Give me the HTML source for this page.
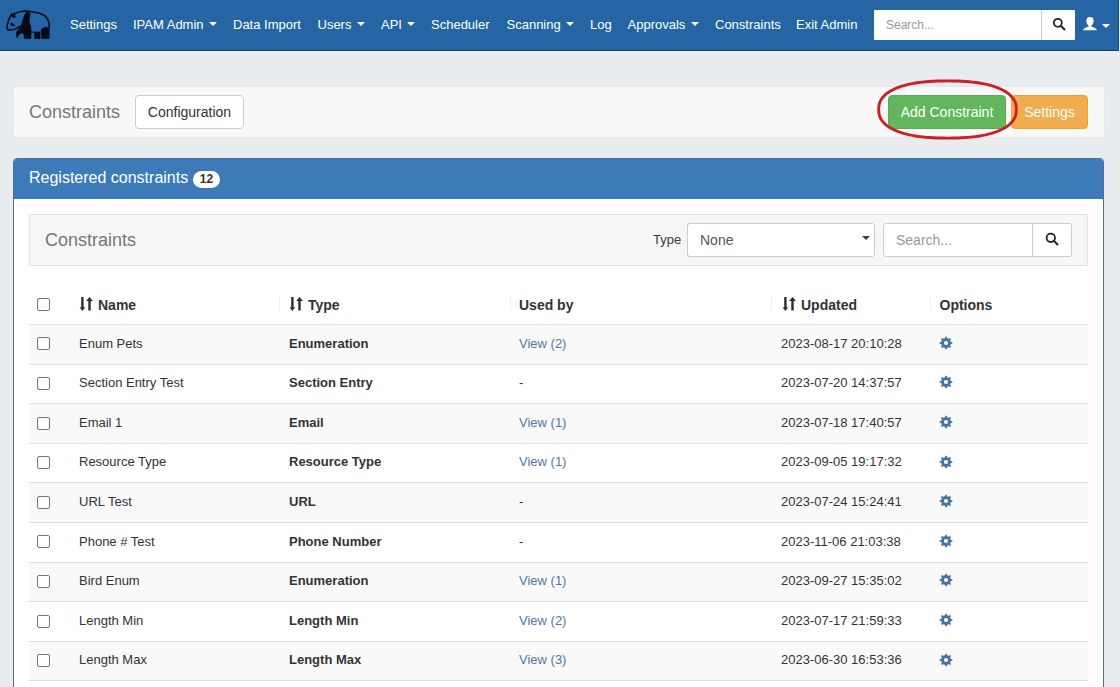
<!DOCTYPE html>
<html><head><meta charset="utf-8">
<style>
*{box-sizing:border-box;margin:0;padding:0}
html,body{width:1120px;height:687px;overflow:hidden}
body{background:#e9ecef;font-family:"Liberation Sans",sans-serif;font-size:13px;color:#333;position:relative}
.abs{position:absolute}
#nav{position:absolute;left:0;top:0;width:1119px;height:51px;background:#2565a3;border-bottom:1px solid #173f69;border-right:1px solid #1d4f80}
.ni{position:absolute;top:16.5px;color:#fff;font-size:13px;line-height:15px;white-space:nowrap}
.caret{display:inline-block;width:0;height:0;border-top:4px solid #fff;border-left:4px solid transparent;border-right:4px solid transparent;vertical-align:middle;margin-left:5.5px;position:relative;top:-1px}
.nsearch{position:absolute;left:874px;top:10px;width:201px;height:30px;background:#fff;border-radius:1px}
.nsearch .ph{position:absolute;left:12px;top:8px;color:#999;font-size:12px}
.nsearch .div{position:absolute;left:167px;top:0;width:1px;height:30px;background:#ccc}
#hdr{position:absolute;left:13px;top:86px;width:1092px;height:52px;background:#f8f8f8;border:1px solid #e6e8eb;border-radius:4px}
.btn{position:absolute;border-radius:4px;font-size:14px;line-height:16px;text-align:center;white-space:nowrap}
#panel{position:absolute;left:13px;top:158px;width:1091px;height:600px;border:1px solid #4f6f90;border-radius:4px;background:#fff}
#ph{position:absolute;left:0;top:0;width:1089px;height:40px;background:#3d7ab8;color:#fff;font-size:16px;border-radius:3px 3px 0 0}
#well{position:absolute;left:15px;top:55px;width:1059px;height:52px;background:#f6f6f6;border:1px solid #e3e3e3}
.cb{position:absolute;width:13px;height:13px;border:1px solid #767676;border-radius:2px;background:#fff}
.row{position:absolute;left:15px;width:1059px;border-top:1px solid #ddd}
.row.odd{background:#f9f9f9}
.c{position:absolute;white-space:nowrap;font-size:13px;line-height:15px}
.b{font-weight:bold}
.lnk{color:#52789f}
.hd{font-weight:bold;font-size:14px;letter-spacing:0px;color:#333}
</style></head>
<body>
<svg width="0" height="0" style="position:absolute"><defs>
<g id="gear"><path fill="#4574a3" fill-rule="evenodd" d="M5.14 2.52 L5.88 2.13 L6.33 0.64 L7.67 0.64 L8.12 2.13 L8.86 2.52 L9.65 2.76 L11.03 2.03 L11.97 2.97 L11.24 4.35 L11.48 5.14 L11.87 5.88 L13.36 6.33 L13.36 7.67 L11.87 8.12 L11.48 8.86 L11.24 9.65 L11.97 11.03 L11.03 11.97 L9.65 11.24 L8.86 11.48 L8.12 11.87 L7.67 13.36 L6.33 13.36 L5.88 11.87 L5.14 11.48 L4.35 11.24 L2.97 11.97 L2.03 11.03 L2.76 9.65 L2.52 8.86 L2.13 8.12 L0.64 7.67 L0.64 6.33 L2.13 5.88 L2.52 5.14 L2.76 4.35 L2.03 2.97 L2.97 2.03 L4.35 2.76 Z M7 4.9 A2.1 2.1 0 1 0 7 9.1 A2.1 2.1 0 1 0 7 4.9 Z"/></g>
<g id="sort"><path fill="#2e2e2e" d="M2.2 0 H4.6 V10.2 H6.2 L3.4 14 L0.6 10.2 H2.2 Z M9.3 13.6 H11.7 V3.9 H13.9 L10.5 0 L7.1 3.9 H9.3 Z"/></g>
</defs></svg>
<div id="nav">
  <svg class="abs" style="left:0;top:0" width="56" height="44" viewBox="0 0 56 44">
    <g fill="#050b16" stroke="none">
    <path d="M13.5 14 C17 12.2 20.5 11.2 24.5 11 C30 11 35.5 12.4 40 13.4 C43.5 14.3 46.5 16.5 48 19.8 C49.3 22.6 49.4 25.5 49.2 29" fill="none" stroke="#050b16" stroke-width="1.5"/>
    <path d="M11.3 15 C9.8 17 8.8 19.5 8.2 21.5 C7.6 23.5 7 25.5 7 27.3 C7 29 8 30.1 9.6 30.1 C11.5 30 13 29.7 14.8 29.1 C16.5 28.5 18.5 27.3 20.5 26" fill="none" stroke="#050b16" stroke-width="1.5"/>
    <path d="M31 32 C32.5 31.8 33.5 32 34.4 32.2" fill="none" stroke="#050b16" stroke-width="1.1"/>
    <path d="M11 13.2 C12.5 13 14 13.8 15.2 15 C15.7 16 15.7 17 15.4 17.9 C14 17.6 12.6 17.3 11.6 16.9 C10.8 16 10.6 14.2 11 13.2 Z"/>
    <path d="M10.3 23.2 C11 22.6 12.2 22.8 13.4 23.6 C14.4 24.3 14.9 25.4 14.5 26 C13.7 26.5 12.3 26.2 11.3 25.5 C10.4 24.8 10 23.8 10.3 23.2 Z"/>
    <path d="M26.2 11.8 C27.8 11.9 29.3 12.3 30.4 13.3 C30.2 16 29.5 19.5 29.5 21.8 C29.6 23.8 30.5 24.9 30.9 26 C31.2 28 31.4 30.5 31.4 33 L31.2 38.8 L23.9 38.8 C24 37.2 24.2 35.2 23.2 33.8 C22.2 33 21 33.1 20.2 33.8 C19 35 18 36.6 17.4 38.3 C16.4 37 15.9 35.4 16.1 33.4 C16.3 31.4 17.5 29.6 19 28.4 C20.3 27 21.5 24.5 22.2 21.5 C23 18.5 24.3 14.5 26.2 11.8 Z"/>
    <path d="M34.2 32 C36 31.7 38.5 31.6 40.4 31.8 L40.4 39 L34.4 39 Z"/>
    <path d="M40.8 30.5 C41.2 28.2 43.5 27 45.8 27 C48 27.1 49.4 28.4 49.5 30.5 L49.5 38.8 L41.4 38.8 L41.1 33 Z"/>
    </g>
  </svg>
  <div class="ni" style="left:70px">Settings</div>
  <div class="ni" style="left:133px">IPAM Admin<span class="caret"></span></div>
  <div class="ni" style="left:233px">Data Import</div>
  <div class="ni" style="left:317.5px">Users<span class="caret"></span></div>
  <div class="ni" style="left:381px">API<span class="caret"></span></div>
  <div class="ni" style="left:431px">Scheduler</div>
  <div class="ni" style="left:506.5px">Scanning<span class="caret"></span></div>
  <div class="ni" style="left:590px">Log</div>
  <div class="ni" style="left:627.5px">Approvals<span class="caret"></span></div>
  <div class="ni" style="left:715px">Constraints</div>
  <div class="ni" style="left:796px">Exit Admin</div>
  <div class="nsearch"><span class="ph">Search...</span><div class="div"></div>
    <svg class="abs" style="left:178px;top:7.4px" width="14" height="14" viewBox="0 0 14 14"><circle cx="5.8" cy="5.8" r="4.0" fill="none" stroke="#222" stroke-width="1.7"/><path d="M8.8 8.8 L12.5 12.5" stroke="#222" stroke-width="2" stroke-linecap="round"/></svg>
  </div>
  <svg class="abs" style="left:1082px;top:15.6px" width="16" height="16" viewBox="0 0 16 16"><path d="M8 1 C10.8 1 11.9 3 11.6 5.5 C11.4 7.5 10.4 9 9.4 9.7 L9.5 10.7 C12 11.4 14.5 12.2 15 14.3 L1 14.3 C1.5 12.2 4 11.4 6.5 10.7 L6.6 9.7 C5.6 9 4.6 7.5 4.4 5.5 C4.1 3 5.2 1 8 1 Z" fill="#fff"/></svg>
  <span class="abs" style="left:1102px;top:24px;width:0;height:0;border-top:4px solid #fff;border-left:4px solid transparent;border-right:4px solid transparent"></span>
</div>

<div id="hdr">
  <div class="abs" style="left:15px;top:15px;font-size:18px;color:#777;line-height:20px">Constraints</div>
  <div class="btn" style="left:121px;top:8px;width:109px;height:34px;background:#fff;border:1px solid #ccc;color:#333;padding-top:8px;font-size:14px">Configuration</div>
  <div class="btn" style="left:874px;top:8px;width:118px;height:34px;background:#63b65b;border:1px solid #58ad50;color:#fff;padding-top:8px">Add Constraint</div>
  <div class="btn" style="left:997px;top:8px;width:77px;height:34px;background:#f0ad4e;border:1px solid #eea236;color:#fff;padding-top:8px">Settings</div>
</div>
<svg class="abs" style="left:870px;top:74px" width="160" height="72" viewBox="0 0 160 72">
  <path d="M146.30 35.50 L146.22 37.82 L145.98 39.68 L145.58 41.40 L145.02 43.01 L144.30 44.55 L143.42 46.03 L142.39 47.44 L141.20 48.80 L139.86 50.10 L138.37 51.36 L136.73 52.55 L134.95 53.70 L133.01 54.78 L130.94 55.82 L128.73 56.79 L126.38 57.71 L123.89 58.58 L121.27 59.38 L118.52 60.12 L115.64 60.80 L112.63 61.42 L109.50 61.98 L106.23 62.48 L102.82 62.90 L99.28 63.27 L95.57 63.57 L91.69 63.80 L87.57 63.97 L83.09 64.07 L77.50 64.10 L71.91 64.07 L67.43 63.97 L63.31 63.80 L59.43 63.57 L55.72 63.27 L52.18 62.90 L48.77 62.48 L45.50 61.98 L42.37 61.42 L39.36 60.80 L36.48 60.12 L33.73 59.38 L31.11 58.58 L28.62 57.71 L26.27 56.79 L24.06 55.82 L21.99 54.78 L20.05 53.70 L18.27 52.55 L16.63 51.36 L15.14 50.10 L13.80 48.80 L12.61 47.44 L11.58 46.03 L10.70 44.55 L9.98 43.01 L9.42 41.40 L9.02 39.68 L8.78 37.82 L8.70 35.50 L8.78 33.18 L9.02 31.32 L9.42 29.60 L9.98 27.99 L10.70 26.45 L11.58 24.97 L12.61 23.56 L13.80 22.20 L15.14 20.90 L16.63 19.64 L18.27 18.45 L20.05 17.30 L21.99 16.22 L24.06 15.18 L26.27 14.21 L28.62 13.29 L31.11 12.42 L33.73 11.62 L36.48 10.88 L39.36 10.20 L42.37 9.58 L45.50 9.02 L48.77 8.52 L52.18 8.10 L55.72 7.73 L59.43 7.43 L63.31 7.20 L67.43 7.03 L71.91 6.93 L77.50 6.90 L83.09 6.93 L87.57 7.03 L91.69 7.20 L95.57 7.43 L99.28 7.73 L102.82 8.10 L106.23 8.52 L109.50 9.02 L112.63 9.58 L115.64 10.20 L118.52 10.88 L121.27 11.62 L123.89 12.42 L126.38 13.29 L128.73 14.21 L130.94 15.18 L133.01 16.22 L134.95 17.30 L136.73 18.45 L138.37 19.64 L139.86 20.90 L141.20 22.20 L142.39 23.56 L143.42 24.97 L144.30 26.45 L145.02 27.99 L145.58 29.60 L145.98 31.32 L146.22 33.18 Z" fill="none" stroke="#cc1f27" stroke-width="2.9" stroke-linejoin="round"/>
</svg>

<div id="panel">
  <div id="ph"><span class="abs" style="left:15px;top:10px;line-height:18px">Registered constraints</span>
    <span class="abs" style="left:179px;top:11.8px;width:27px;height:17px;border-radius:9px;background:#fff;color:#333;font-size:12px;font-weight:bold;text-align:center;line-height:17px">12</span>
  </div>
  <div id="well">
    <div class="abs" style="left:15px;top:15px;font-size:18px;color:#777;line-height:20px">Constraints</div>
    <div class="abs" style="left:623px;top:16.5px;font-size:13px;color:#3a3a3a;line-height:15px">Type</div>
    <div class="abs" style="left:657px;top:8px;width:188px;height:34px;background:#fff;border:1px solid #ccc;border-radius:3px">
      <span class="abs" style="left:12px;top:8px;font-size:14px;color:#555;line-height:16px">None</span>
      <span class="abs" style="left:174px;top:12px;width:0;height:0;border-top:4px solid #3a3a3a;border-left:4px solid transparent;border-right:4px solid transparent"></span>
    </div>
    <div class="abs" style="left:853px;top:8px;width:189px;height:34px;background:#fff;border:1px solid #ccc;border-radius:3px">
      <span class="abs" style="left:12px;top:8px;font-size:14px;color:#999;line-height:16px">Search...</span>
      <div class="abs" style="left:148px;top:-1px;width:1px;height:34px;background:#ccc"></div>
      <svg class="abs" style="left:161px;top:8px" width="14" height="14" viewBox="0 0 14 14"><circle cx="5.8" cy="5.8" r="4.2" fill="none" stroke="#222" stroke-width="1.8"/><path d="M8.8 8.8 L12.5 12.5" stroke="#222" stroke-width="2" stroke-linecap="round"/></svg>
    </div>
  </div>
  <!-- table -->
  <div id="tbl">
<div class="abs" style="left:15px;top:165px;width:1059px;height:1px;background:#ddd"></div>
<div class="cb" style="left:23px;top:139px"></div>
<div class="abs" style="left:265px;top:137px;width:1px;height:15px;background:#eee"></div>
<div class="abs" style="left:496px;top:137px;width:1px;height:15px;background:#eee"></div>
<div class="abs" style="left:757px;top:137px;width:1px;height:15px;background:#eee"></div>
<div class="abs" style="left:916px;top:137px;width:1px;height:15px;background:#eee"></div>
<svg class="abs" style="left:65px;top:137.89999999999998px" width="14" height="14" viewBox="0 0 14 14"><use href="#sort"/></svg>
<div class="c hd" style="left:84px;top:139.3px">Name</div>
<svg class="abs" style="left:275px;top:137.89999999999998px" width="14" height="14" viewBox="0 0 14 14"><use href="#sort"/></svg>
<div class="c hd" style="left:294px;top:139.3px">Type</div>
<div class="c hd" style="left:505px;top:139.3px">Used by</div>
<svg class="abs" style="left:768px;top:137.89999999999998px" width="14" height="14" viewBox="0 0 14 14"><use href="#sort"/></svg>
<div class="c hd" style="left:787px;top:139.3px">Updated</div>
<div class="c hd" style="left:925.5px;top:139.3px">Options</div>
<div class="row odd" style="top:165.0px;height:40.6px"></div>
<div class="cb" style="left:23px;top:178.4px"></div>
<div class="c" style="left:65px;top:176.6px">Enum Pets</div>
<div class="c b" style="left:275px;top:176.6px">Enumeration</div>
<div class="c lnk" style="left:505px;top:176.6px">View (2)</div>
<div class="c" style="left:767px;top:176.6px">2023-08-17 20:10:28</div>
<svg class="abs" style="left:924.7px;top:176.8px" width="14" height="14" viewBox="0 0 14 14"><use href="#gear"/></svg>
<div class="row" style="top:204.6px;height:40.6px"></div>
<div class="cb" style="left:23px;top:218.0px"></div>
<div class="c" style="left:65px;top:216.2px">Section Entry Test</div>
<div class="c b" style="left:275px;top:216.2px">Section Entry</div>
<div class="c" style="left:505px;top:216.2px">-</div>
<div class="c" style="left:767px;top:216.2px">2023-07-20 14:37:57</div>
<svg class="abs" style="left:924.7px;top:216.4px" width="14" height="14" viewBox="0 0 14 14"><use href="#gear"/></svg>
<div class="row odd" style="top:244.2px;height:40.6px"></div>
<div class="cb" style="left:23px;top:257.6px"></div>
<div class="c" style="left:65px;top:255.8px">Email 1</div>
<div class="c b" style="left:275px;top:255.8px">Email</div>
<div class="c lnk" style="left:505px;top:255.8px">View (1)</div>
<div class="c" style="left:767px;top:255.8px">2023-07-18 17:40:57</div>
<svg class="abs" style="left:924.7px;top:256.0px" width="14" height="14" viewBox="0 0 14 14"><use href="#gear"/></svg>
<div class="row" style="top:283.8px;height:40.6px"></div>
<div class="cb" style="left:23px;top:297.2px"></div>
<div class="c" style="left:65px;top:295.4px">Resource Type</div>
<div class="c b" style="left:275px;top:295.4px">Resource Type</div>
<div class="c lnk" style="left:505px;top:295.4px">View (1)</div>
<div class="c" style="left:767px;top:295.4px">2023-09-05 19:17:32</div>
<svg class="abs" style="left:924.7px;top:295.6px" width="14" height="14" viewBox="0 0 14 14"><use href="#gear"/></svg>
<div class="row odd" style="top:323.4px;height:40.6px"></div>
<div class="cb" style="left:23px;top:336.8px"></div>
<div class="c" style="left:65px;top:335.0px">URL Test</div>
<div class="c b" style="left:275px;top:335.0px">URL</div>
<div class="c" style="left:505px;top:335.0px">-</div>
<div class="c" style="left:767px;top:335.0px">2023-07-24 15:24:41</div>
<svg class="abs" style="left:924.7px;top:335.2px" width="14" height="14" viewBox="0 0 14 14"><use href="#gear"/></svg>
<div class="row" style="top:363.0px;height:40.6px"></div>
<div class="cb" style="left:23px;top:376.4px"></div>
<div class="c" style="left:65px;top:374.6px">Phone # Test</div>
<div class="c b" style="left:275px;top:374.6px">Phone Number</div>
<div class="c" style="left:505px;top:374.6px">-</div>
<div class="c" style="left:767px;top:374.6px">2023-11-06 21:03:38</div>
<svg class="abs" style="left:924.7px;top:374.8px" width="14" height="14" viewBox="0 0 14 14"><use href="#gear"/></svg>
<div class="row odd" style="top:402.6px;height:40.6px"></div>
<div class="cb" style="left:23px;top:416.0px"></div>
<div class="c" style="left:65px;top:414.2px">Bird Enum</div>
<div class="c b" style="left:275px;top:414.2px">Enumeration</div>
<div class="c lnk" style="left:505px;top:414.2px">View (1)</div>
<div class="c" style="left:767px;top:414.2px">2023-09-27 15:35:02</div>
<svg class="abs" style="left:924.7px;top:414.4px" width="14" height="14" viewBox="0 0 14 14"><use href="#gear"/></svg>
<div class="row" style="top:442.2px;height:40.6px"></div>
<div class="cb" style="left:23px;top:455.6px"></div>
<div class="c" style="left:65px;top:453.8px">Length Min</div>
<div class="c b" style="left:275px;top:453.8px">Length Min</div>
<div class="c lnk" style="left:505px;top:453.8px">View (2)</div>
<div class="c" style="left:767px;top:453.8px">2023-07-17 21:59:33</div>
<svg class="abs" style="left:924.7px;top:454.0px" width="14" height="14" viewBox="0 0 14 14"><use href="#gear"/></svg>
<div class="row odd" style="top:481.8px;height:40.6px"></div>
<div class="cb" style="left:23px;top:495.2px"></div>
<div class="c" style="left:65px;top:493.4px">Length Max</div>
<div class="c b" style="left:275px;top:493.4px">Length Max</div>
<div class="c lnk" style="left:505px;top:493.4px">View (3)</div>
<div class="c" style="left:767px;top:493.4px">2023-06-30 16:53:36</div>
<svg class="abs" style="left:924.7px;top:493.6px" width="14" height="14" viewBox="0 0 14 14"><use href="#gear"/></svg>
<div class="row" style="top:521.4px;height:20px"></div>
</div><!--/tbl-->
</div>
</body></html>
